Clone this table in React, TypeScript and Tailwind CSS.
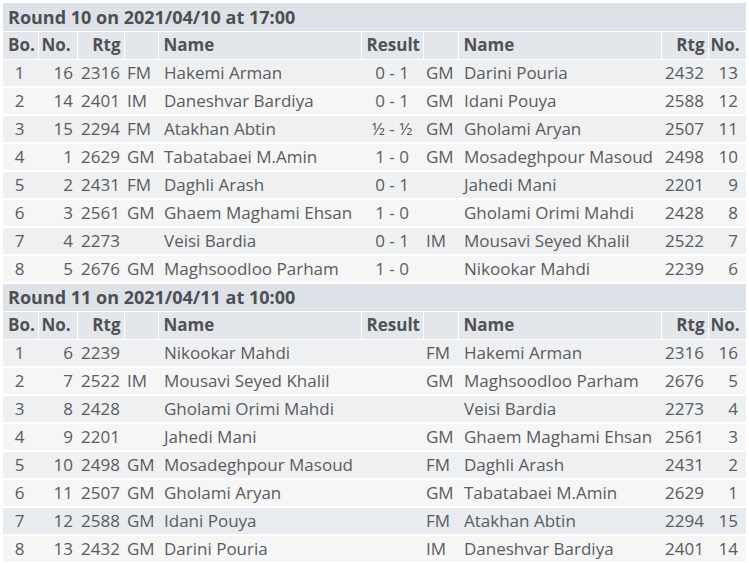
type Pair = [string, string, string, string, string, string, string, string, string, string]

const round10: Pair[] = [
  ['1', '16', '2316', 'FM', 'Hakemi Arman', '0 - 1', 'GM', 'Darini Pouria', '2432', '13'],
  ['2', '14', '2401', 'IM', 'Daneshvar Bardiya', '0 - 1', 'GM', 'Idani Pouya', '2588', '12'],
  ['3', '15', '2294', 'FM', 'Atakhan Abtin', '½ - ½', 'GM', 'Gholami Aryan', '2507', '11'],
  ['4', '1', '2629', 'GM', 'Tabatabaei M.Amin', '1 - 0', 'GM', 'Mosadeghpour Masoud', '2498', '10'],
  ['5', '2', '2431', 'FM', 'Daghli Arash', '0 - 1', '', 'Jahedi Mani', '2201', '9'],
  ['6', '3', '2561', 'GM', 'Ghaem Maghami Ehsan', '1 - 0', '', 'Gholami Orimi Mahdi', '2428', '8'],
  ['7', '4', '2273', '', 'Veisi Bardia', '0 - 1', 'IM', 'Mousavi Seyed Khalil', '2522', '7'],
  ['8', '5', '2676', 'GM', 'Maghsoodloo Parham', '1 - 0', '', 'Nikookar Mahdi', '2239', '6'],
]

const round11: Pair[] = [
  ['1', '6', '2239', '', 'Nikookar Mahdi', '', 'FM', 'Hakemi Arman', '2316', '16'],
  ['2', '7', '2522', 'IM', 'Mousavi Seyed Khalil', '', 'GM', 'Maghsoodloo Parham', '2676', '5'],
  ['3', '8', '2428', '', 'Gholami Orimi Mahdi', '', '', 'Veisi Bardia', '2273', '4'],
  ['4', '9', '2201', '', 'Jahedi Mani', '', 'GM', 'Ghaem Maghami Ehsan', '2561', '3'],
  ['5', '10', '2498', 'GM', 'Mosadeghpour Masoud', '', 'FM', 'Daghli Arash', '2431', '2'],
  ['6', '11', '2507', 'GM', 'Gholami Aryan', '', 'GM', 'Tabatabaei M.Amin', '2629', '1'],
  ['7', '12', '2588', 'GM', 'Idani Pouya', '', 'FM', 'Atakhan Abtin', '2294', '15'],
  ['8', '13', '2432', 'GM', 'Darini Pouria', '', 'IM', 'Daneshvar Bardiya', '2401', '14'],
]

const widths = ['w-[35px]', 'w-[39px]', 'w-[47px]', 'w-[34px]', 'w-[203px]', 'w-[62px]', 'w-[35px]', 'w-[203px]', 'w-[47px]', 'w-[38px]']

function Round({ title, rows, hover }: { title: string; rows: Pair[]; hover?: number }) {
  return (
    <>
      <tr className="h-[28px]">
        <td colSpan={10} className="bg-[#dde2e9] border-b border-white px-[5px] text-[18px] font-bold text-[#4d4f52] leading-none">
          {title}
        </td>
      </tr>
      <tr className="h-[28px] text-[17px] font-bold text-[#505255]">
        <th className="bg-[#e3e6eb] border-b border-r border-white px-[5px] text-left">Bo.</th>
        <th className="bg-[#e3e6eb] border-b border-r border-white px-[3px] text-left">No.</th>
        <th className="bg-[#e3e6eb] border-b border-r border-white px-[3px] text-right">Rtg</th>
        <th className="bg-[#e3e6eb] border-b border-r border-white"></th>
        <th className="bg-[#e3e6eb] border-b border-r border-white px-[5px] text-left">Name</th>
        <th className="bg-[#e3e6eb] border-b border-r border-white px-[5px] text-left">Result</th>
        <th className="bg-[#e3e6eb] border-b border-r border-white"></th>
        <th className="bg-[#e3e6eb] border-b border-r border-white px-[5px] text-left">Name</th>
        <th className="bg-[#e3e6eb] border-b border-r border-white px-[3px] text-right">Rtg</th>
        <th className="bg-[#e3e6eb] border-b border-white px-[2px] text-left">No.</th>
      </tr>
      {rows.map((r, i) => (
        <tr
          key={i}
          className={`h-[28px] border-b-2 border-white text-[17px] text-[#595b5e] ${
            i === hover ? 'bg-[#e8ebef]' : i % 2 === 0 ? 'bg-[#eff0f1]' : 'bg-[#f6f6f6]'
          }`}
        >
          <td className="text-center pr-[2px]">{r[0]}</td>
          <td className="text-right pr-[4px]">{r[1]}</td>
          <td className="text-right pr-[4px]">{r[2]}</td>
          <td className="pl-[3px]">{r[3]}</td>
          <td className="pl-[6px] whitespace-nowrap">{r[4]}</td>
          <td className="text-center">{r[5]}</td>
          <td className="pl-[3px]">{r[6]}</td>
          <td className="pl-[6px] whitespace-nowrap">{r[7]}</td>
          <td className="text-right pr-[4px]">{r[8]}</td>
          <td className="text-right pr-[8px]">{r[9]}</td>
        </tr>
      ))}
    </>
  )
}

export default function App() {
  return (
    <div className="bg-white w-[749px] h-[563px] overflow-hidden pt-[3px] pl-[3px]" style={{ fontFamily: "'Open Sans', 'Noto Sans', sans-serif" }}>
      <table className="table-fixed border-collapse w-[743px]">
        <colgroup>
          {widths.map((w, i) => (
            <col key={i} className={w} />
          ))}
        </colgroup>
        <tbody>
          <Round title="Round 10 on 2021/04/10 at 17:00" rows={round10} />
          <Round title="Round 11 on 2021/04/11 at 10:00" rows={round11} hover={6} />
        </tbody>
      </table>
    </div>
  )
}
